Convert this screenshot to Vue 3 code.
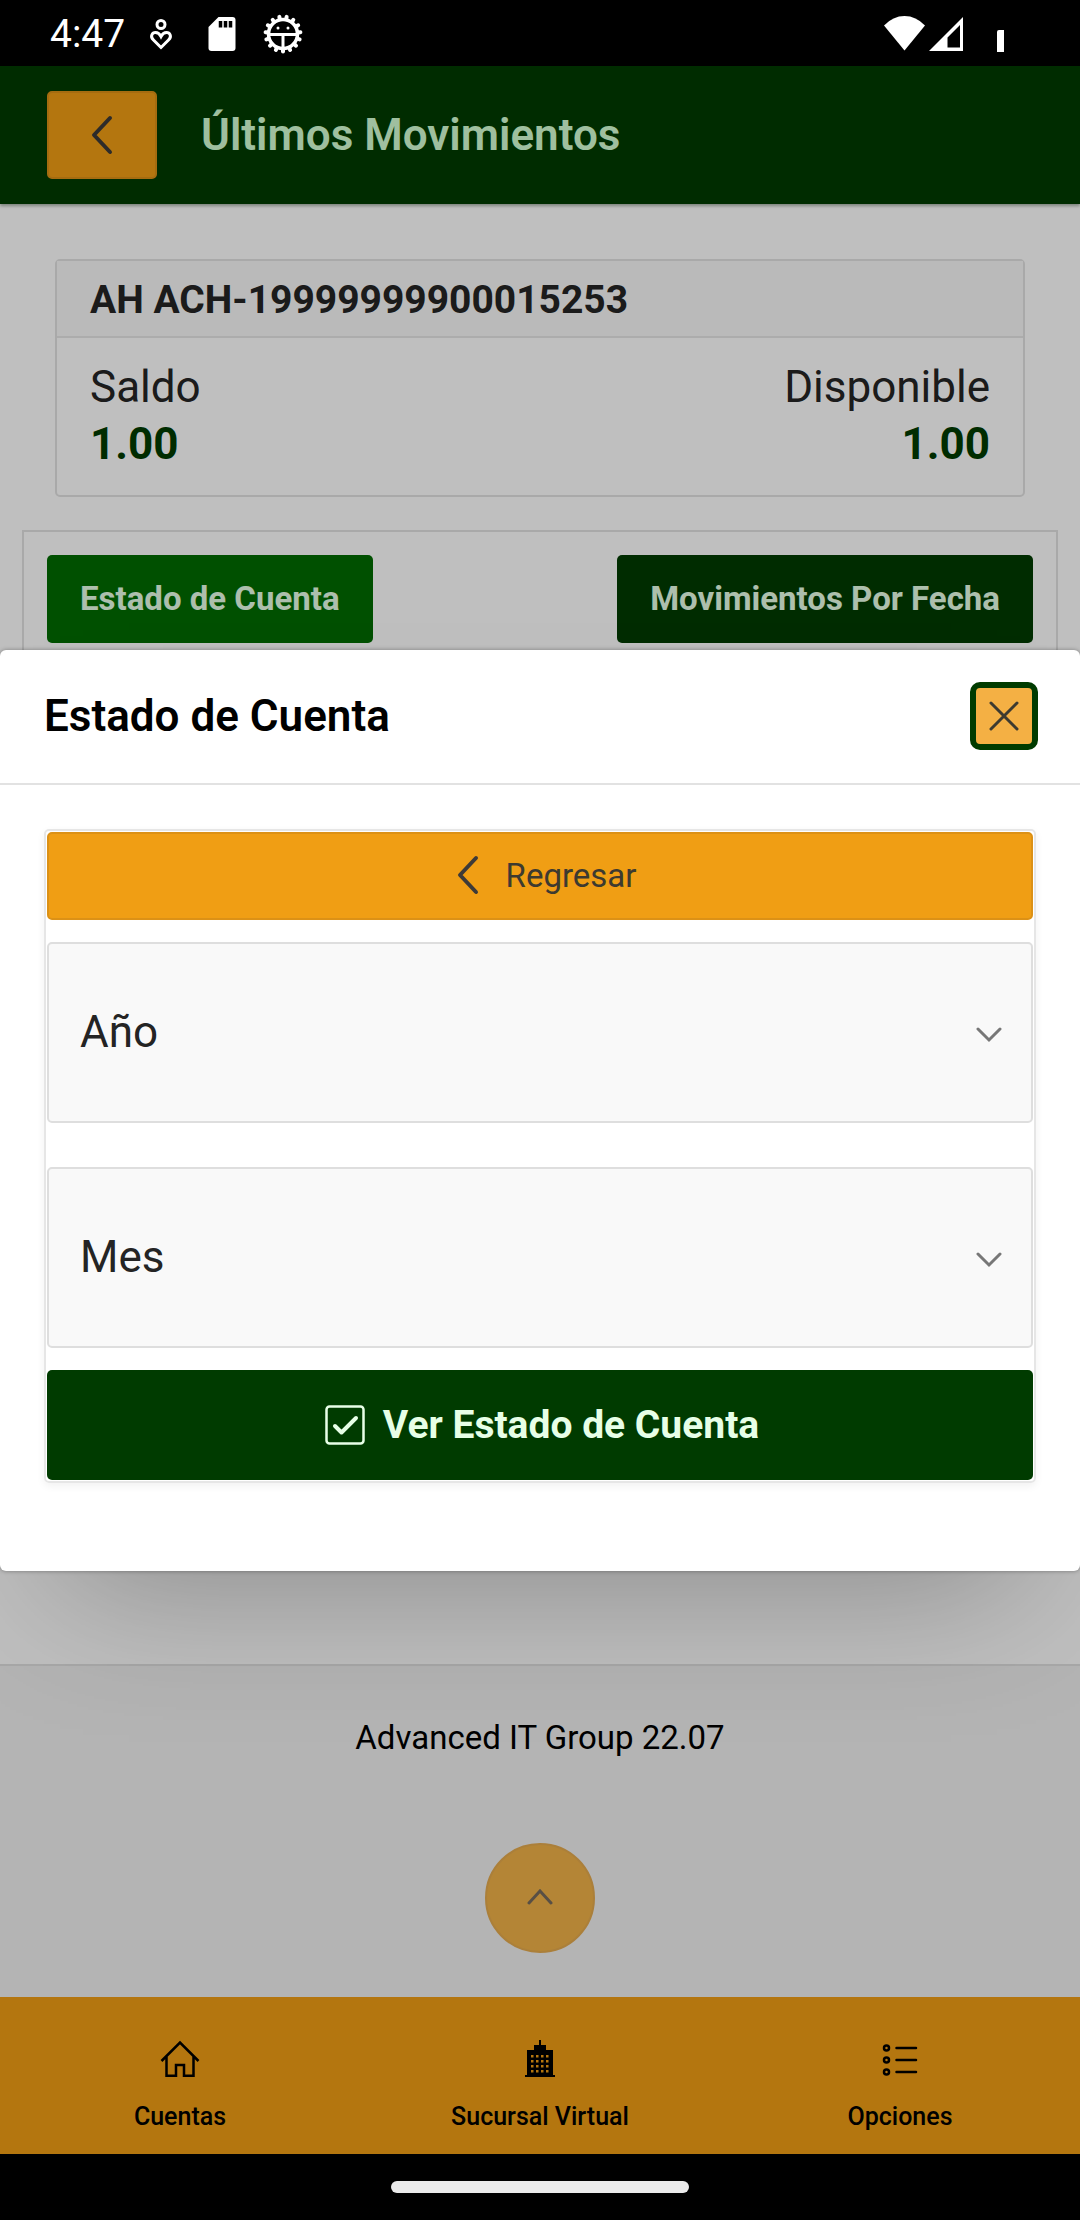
<script setup>
import { ref } from 'vue'

const year = ref('')
const month = ref('')
const years = ['2022', '2021', '2020']
const months = ['Enero', 'Febrero', 'Marzo', 'Abril', 'Mayo', 'Junio', 'Julio', 'Agosto', 'Septiembre', 'Octubre', 'Noviembre', 'Diciembre']

const windowColumns = [8, 13, 18, 23]
const windowRows = [18, 23, 28, 33]
const optionRows = [11, 23, 35]
const gearTeeth = Array.from({ length: 15 }, (_, i) => i * 24)
</script>

<template>
  <div class="screen">
    <div class="status-bar">
      <div class="status-left">
        <span class="clock">4:47</span>
        <div class="status-icons">
          <svg width="44" height="44" viewBox="0 0 44 44" fill="none" stroke="#fff" stroke-width="3">
            <circle cx="22" cy="12.500" r="4" />
            <path d="M22 35.500 L14.500 28 C10.500 24 13.500 20.500 16.500 20.500 C19.500 20.500 21 22.500 22 24.500 C23 22.500 24.500 20.500 27.500 20.500 C30.500 20.500 33.500 24 29.500 28 Z" />
          </svg>
          <svg width="44" height="44" viewBox="0 0 44 44">
            <path fill="#fff" d="M18.500 5 H32.500 Q35.500 5 35.500 8 V36 Q35.500 39 32.500 39 H11.500 Q8.500 39 8.500 36 V15 Z" />
            <path stroke="#000" stroke-width="3.500" d="M20.500 9 V15.500 M25.500 9 V15.500 M30.500 9 V15.500" />
          </svg>
          <svg width="44" height="44" viewBox="0 0 44 44" fill="none" stroke="#fff">
            <circle cx="22" cy="22" r="14.500" stroke-width="3.500" />
            <path
              v-for="angle in gearTeeth"
              :key="angle"
              d="M22 37 V39.500"
              stroke-width="4"
              stroke-linecap="round"
              :transform="`rotate(${angle} 22 22)`"
            />
            <path stroke-width="3" d="M8 22.500 H36 M22 22 V36" />
            <g fill="#fff" stroke="none">
              <circle cx="17" cy="16" r="1.500" />
              <circle cx="27" cy="16" r="1.500" />
            </g>
          </svg>
        </div>
      </div>
      <div class="status-right">
        <svg width="41" height="44" viewBox="0 0 41 44">
          <path fill="#fff" d="M20.500 38.500 L0 13.500 Q9 4 20.500 4 T41 13.500 Z" />
        </svg>
        <svg width="34" height="44" viewBox="0 0 34 44">
          <path fill="#fff" fill-rule="evenodd" d="M34 5 V39 H0 Z M31 13 L18.500 25.500 V35.500 H31 Z" />
        </svg>
        <svg class="battery" width="7" height="44" viewBox="0 0 7 44">
          <path fill="#fff" d="M0 20 Q0 18 2 18 H7 V40 H0 Z" />
        </svg>
      </div>
    </div>

    <div class="app">
      <header class="toolbar">
        <button class="back" type="button" aria-label="Volver">
          <svg width="24" height="40" viewBox="0 0 24 40"><path d="M20 3 L4 20 L20 37" /></svg>
        </button>
        <h1>Últimos Movimientos</h1>
      </header>

      <main class="content">
        <section class="account">
          <h2>AH ACH-19999999900015253</h2>
          <dl>
            <div>
              <dt>Saldo</dt>
              <dd>1.00</dd>
            </div>
            <div class="end">
              <dt>Disponible</dt>
              <dd>1.00</dd>
            </div>
          </dl>
        </section>
        <section class="actions">
          <button class="action light" type="button">Estado de Cuenta</button>
          <button class="action" type="button">Movimientos Por Fecha</button>
        </section>
      </main>

      <footer class="footer">
        <p>Advanced IT Group 22.07</p>
        <button class="to-top" type="button" aria-label="Subir">
          <svg width="28" height="18" viewBox="0 0 28 18"><path d="M3 14 L14 2 L25 14" /></svg>
        </button>
      </footer>

      <nav class="tabs">
        <a href="#cuentas">
          <svg width="44" height="44" viewBox="0 0 44 44" fill="none" stroke="#000" stroke-width="2.500">
            <path d="M3.500 24 L22 5.500 L40.500 24 M8.500 19.500 V38.800 H18 V28 H26 V38.800 H35.500 V19.500" />
          </svg>
          <span>Cuentas</span>
        </a>
        <a href="#sucursal">
          <svg width="34" height="44" viewBox="0 0 34 44">
            <path d="M16 3 H18 V8 H23 V13 H30 V38 H32 V40 H2 V38 H4 V13 H11 V8 H16 Z" />
            <g fill="#f09e14">
              <template v-for="y in windowRows" :key="y">
                <rect v-for="x in windowColumns" :key="x" :x="x" :y="y" width="2.500" height="2.500" />
              </template>
            </g>
          </svg>
          <span>Sucursal Virtual</span>
        </a>
        <a href="#opciones">
          <svg width="44" height="44" viewBox="0 0 44 44" fill="none" stroke="#000" stroke-width="2.500">
            <g v-for="y in optionRows" :key="y">
              <circle cx="8.500" :cy="y" r="2.500" />
              <path stroke-linecap="round" :d="`M18.500 ${y} H38`" />
            </g>
          </svg>
          <span>Opciones</span>
        </a>
      </nav>

      <div class="scrim">
        <div class="dialog" role="dialog" aria-modal="true" aria-labelledby="dialog-title">
          <div class="dialog-head">
            <h2 id="dialog-title">Estado de Cuenta</h2>
            <button class="close" type="button" aria-label="Cerrar">
              <svg width="30" height="30" viewBox="0 0 30 30"><path d="M2 2 L28 28 M28 2 L2 28" /></svg>
            </button>
          </div>
          <form class="form" @submit.prevent>
            <button class="return" type="button">
              <svg width="24" height="40" viewBox="0 0 24 40"><path d="M20 3 L4 20 L20 37" /></svg>
              Regresar
            </button>
            <div class="field">
              <select v-model="year" aria-label="Año">
                <option value="">Año</option>
                <option v-for="y in years" :key="y">{{ y }}</option>
              </select>
              <svg width="26" height="20" viewBox="0 0 26 20"><path d="M2 6 L13 17 L24 6" /></svg>
            </div>
            <div class="field">
              <select v-model="month" aria-label="Mes">
                <option value="">Mes</option>
                <option v-for="m in months" :key="m">{{ m }}</option>
              </select>
              <svg width="26" height="20" viewBox="0 0 26 20"><path d="M2 6 L13 17 L24 6" /></svg>
            </div>
            <button class="submit" type="submit">
              <svg width="40" height="40" viewBox="0 0 40 40" fill="none" stroke="#e7ffe7">
                <rect x="1.500" y="1.500" width="37" height="37" rx="3" stroke-width="2.500" />
                <path d="M10 21 L16.500 27.500 L31 13" stroke-width="4" stroke-linecap="round" stroke-linejoin="round" />
              </svg>
              Ver Estado de Cuenta
            </button>
          </form>
        </div>
      </div>
    </div>

    <div class="gesture-bar"><span></span></div>
  </div>
</template>

<style>
body {
  margin: 0;
  background: #000;
}
</style>

<style scoped>
.screen {
  display: flex;
  flex-direction: column;
  min-height: 100vh;
  font-family: Roboto, "Liberation Sans", sans-serif;
  font-size: 33px;
  color: #242424;
}
.screen * {
  box-sizing: border-box;
}
h1,
h2,
p,
dl,
dd {
  margin: 0;
}
button,
select {
  margin: 0;
  font: inherit;
}
button {
  display: flex;
  align-items: center;
  justify-content: center;
  padding: 0;
  border: 0;
  border-radius: 5px;
}
svg {
  flex: none;
}

.status-bar {
  display: flex;
  justify-content: space-between;
  align-items: center;
  height: 66px;
  padding: 2px 76px 0 50px;
  background: #000;
  color: #fff;
}
.status-left,
.status-icons,
.status-right {
  display: flex;
  align-items: center;
}
.status-left {
  gap: 14px;
}
.status-icons {
  gap: 17px;
}
.status-right {
  gap: 4px;
}
.battery {
  margin-left: 30px;
}
.clock {
  font-size: 39px;
}

.app {
  position: relative;
  display: flex;
  flex: 1;
  flex-direction: column;
  overflow: hidden;
  background: #fff;
}
.toolbar {
  display: flex;
  align-items: center;
  gap: 44px;
  padding: 25px 47px;
  background: #003b00;
  color: #d4ffd4;
  box-shadow: 0 2px 3px rgba(0, 30, 0, 0.35);
}
.toolbar h1 {
  font-size: 44px;
  font-weight: 600;
  line-height: 57px;
}
.back,
.return {
  height: 88px;
  border: 2px solid #dc9116;
  background: #f09e14;
  color: #3d3a30;
}
.back {
  width: 110px;
}
.back path,
.return path {
  fill: none;
  stroke: #3d3a38;
  stroke-width: 4;
  stroke-linecap: round;
  stroke-linejoin: round;
}

.content {
  display: flex;
  flex: 1;
  flex-direction: column;
  gap: 33px;
  padding: 55px 22px;
}
.account {
  margin: 0 33px;
  border: 2px solid #e2e2e2;
  border-radius: 5px;
}
.account h2 {
  padding: 14px 33px 11px;
  border-bottom: 2px solid #e6e6e6;
  background: #f8f8f8;
  font-size: 39px;
  line-height: 50px;
}
.account dl {
  display: flex;
  justify-content: space-between;
  padding: 21px 33px 22px;
  font-size: 44px;
  line-height: 57px;
}
.account dd {
  color: #003b00;
  font-weight: 700;
}
.end {
  text-align: right;
}
.actions {
  display: flex;
  justify-content: space-between;
  padding: 23px;
  border: 2px solid #e2e2e2;
}
.action {
  height: 88px;
  padding: 0 33px 2px;
  background: #003b00;
  color: #e7ffe7;
  font-weight: 700;
}
.action.light {
  background: #006b00;
}

.footer {
  display: flex;
  flex-direction: column;
  align-items: center;
  gap: 84px;
  padding: 50px 0 44px;
  border-top: 2px solid #e0e0e0;
  background: #f0f0f0;
  color: #000;
  line-height: 43px;
}
.to-top {
  width: 110px;
  height: 110px;
  border: 2px solid #e4aa4e;
  border-radius: 50%;
  background: #f0b248;
}
.to-top path {
  fill: none;
  stroke: #766a5c;
  stroke-width: 3;
  stroke-linecap: round;
}

.tabs {
  display: grid;
  grid-template-columns: repeat(3, 1fr);
  padding: 40px 0 21px;
  background: #f09e14;
}
.tabs a {
  display: flex;
  flex-direction: column;
  align-items: center;
  gap: 20px;
  color: #000;
  font-size: 25px;
  font-weight: 500;
  line-height: 32px;
  text-decoration: none;
}

.scrim {
  position: absolute;
  inset: 0;
  display: flex;
  flex-direction: column;
  justify-content: center;
  padding-top: 1px;
  background: rgba(0, 0, 0, 0.25);
}
.dialog {
  padding-bottom: 88px;
  border-radius: 6px;
  background: #fff;
  box-shadow:
    0 0 4px rgba(0, 0, 0, 0.35),
    0 72px 140px -60px rgba(0, 0, 0, 0.28);
}
.dialog-head {
  display: flex;
  align-items: center;
  justify-content: space-between;
  margin-bottom: 44px;
  padding: 32px 42px 33px 44px;
  border-bottom: 2px solid #e2e2e2;
  color: #000;
}
.dialog-head h2 {
  font-size: 44px;
  font-weight: 600;
  line-height: 57px;
}
.close {
  width: 68px;
  height: 68px;
  border: 6px solid #003b00;
  border-radius: 10px;
  background: #f4b044;
}
.close path {
  fill: none;
  stroke: #3d3a30;
  stroke-width: 3;
  stroke-linecap: round;
}
.form {
  display: flex;
  flex-direction: column;
  margin: 0 44px;
  padding: 1px;
  border: 2px solid #e6e6e6;
  border-radius: 5px;
  box-shadow: 0 3px 8px rgba(0, 0, 0, 0.06);
}
.return {
  gap: 26px;
  margin-bottom: 22px;
  padding: 0 0 2px 12px;
}
.field {
  display: grid;
  align-items: center;
  margin-bottom: 22px;
}
.field + .field {
  margin-top: 22px;
}
.field > * {
  grid-area: 1 / 1;
}
.field select {
  width: 100%;
  height: 181px;
  padding: 0 31px 2px;
  border: 2px solid #dedede;
  border-radius: 5px;
  appearance: none;
  background: #f9f9f9;
  color: #242424;
  font-size: 44px;
}
.field svg {
  justify-self: end;
  margin-right: 31px;
  pointer-events: none;
}
.field path {
  fill: none;
  stroke: #777;
  stroke-width: 3;
  stroke-linecap: round;
}
.submit {
  gap: 18px;
  height: 110px;
  padding-left: 4px;
  background: #003b00;
  color: #e7ffe7;
  font-size: 39px;
  font-weight: 700;
}

.gesture-bar {
  display: flex;
  align-items: center;
  justify-content: center;
  height: 66px;
  background: #000;
}
.gesture-bar span {
  width: 298px;
  height: 12px;
  border-radius: 6px;
  background: #ebebeb;
}
</style>
